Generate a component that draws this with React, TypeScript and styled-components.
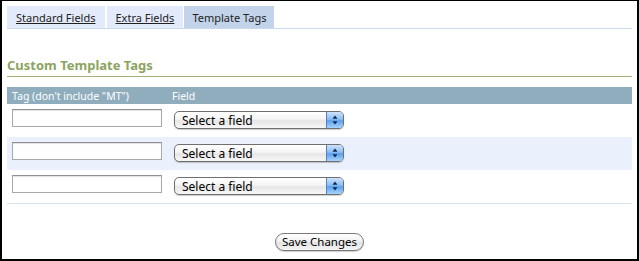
import React from 'react';
import styled, { createGlobalStyle } from 'styled-components';

const GlobalStyle = createGlobalStyle`
    html, body {
        margin: 0;
        padding: 0;
        background: #fff;
    }
    body {
        font-family: "Noto Sans", "DejaVu Sans", sans-serif;
        color: #000;
    }
`;

const Frame = styled.div`
    width: 639px;
    height: 261px;
    box-sizing: border-box;
    border: 2px solid #000;
    border-top-width: 1px;
    padding: 5px 5px 0 5px;
    background: #fff;
    display: flex;
    flex-direction: column;
`;

const TabBar = styled.ul`
    list-style: none;
    margin: 0;
    padding: 0;
    display: flex;
    gap: 2px;
    border-bottom: 1px solid #c9daee;
`;

const Tab = styled.li<{ $active?: boolean }>`
    height: 22px;
    padding: 0 ${(p) => (p.$active ? 8 : 9)}px;
    margin-left: ${(p) => (p.$active ? -1 : 0)}px;
    display: flex;
    align-items: center;
    font-size: 11px;
    background: ${(p) => (p.$active ? '#c3d4ea' : '#e3ebfa')};

    & a {
        color: #222;
        text-decoration: ${(p) => (p.$active ? 'none' : 'underline')};
    }
`;

const Heading = styled.h2`
    margin: 29px 0 0 0;
    padding: 0 0 3px 0;
    font-size: 13px;
    font-weight: bold;
    color: #8ba45f;
    border-bottom: 1px solid #9fb27c;
    line-height: 15px;
`;

const Table = styled.table`
    margin-top: 10px;
    width: 100%;
    border-collapse: collapse;
    font-size: 11px;
`;

const HeadCell = styled.th<{ $width?: number }>`
    background: #8fadbd;
    color: #fff;
    font-weight: normal;
    font-size: 10.5px;
    text-align: left;
    height: 17px;
    padding: 0 5px;
    ${(p) => (p.$width ? `width: ${p.$width}px;` : '')}
`;

const Row = styled.tr<{ $alt?: boolean }>`
    background: ${(p) => (p.$alt ? '#eaf1fd' : '#fff')};

    &:last-child td {
        border-bottom: 1px solid #d9e3f1;
    }
`;

const Cell = styled.td`
    padding: 5px 5px 0 5px;
    height: 28px;
    vertical-align: top;
`;

const TextInput = styled.input`
    box-sizing: border-box;
    width: 150px;
    height: 18px;
    border: 1px solid #a9a9a9;
    border-top-color: #8f8f8f;
    box-shadow: inset 0 1px 1px rgba(0, 0, 0, 0.12);
    padding: 0 3px;
    margin: 0;
    display: block;
    font-size: 11px;
`;

const SelectShell = styled.div`
    box-sizing: border-box;
    width: 170px;
    height: 18px;
    margin: 2px 0 0 2px;
    display: flex;
    border: 1px solid #6f6f6f;
    border-radius: 5px;
    overflow: hidden;
    background: linear-gradient(#ffffff 0%, #f4f4f4 45%, #e6e6e6 55%, #f7f7f7 100%);
    box-shadow: 0 1px 1px rgba(0, 0, 0, 0.2);
`;

const Select = styled.select`
    flex: 1;
    appearance: none;
    -webkit-appearance: none;
    border: none;
    background: transparent;
    font-family: "Noto Sans", "DejaVu Sans", sans-serif;
    font-size: 12px;
    color: #000;
    padding: 0 0 0 7px;
    margin: 0;
    outline: none;
`;

const Stepper = styled.span`
    width: 16px;
    display: flex;
    align-items: center;
    justify-content: center;
    border-left: 1px solid #5a7fb8;
    background: linear-gradient(#cfe3fb 0%, #8cbdf2 45%, #5aa0ee 55%, #a8d4fb 100%);
`;

const Footer = styled.div`
    display: flex;
    justify-content: center;
    margin-top: 29px;
`;

const SaveButton = styled.button`
    height: 18px;
    padding: 0 6px;
    border: 1px solid #7a7a7a;
    border-radius: 9px;
    background: linear-gradient(#ffffff 0%, #f2f2f2 45%, #e2e2e2 55%, #f5f5f5 100%);
    box-shadow: 0 1px 1px rgba(0, 0, 0, 0.2);
    font-family: "Noto Sans", "DejaVu Sans", sans-serif;
    font-size: 11.5px;
    color: #000;
    line-height: 16px;
`;

const Arrows = () => (
    <svg width="6" height="10" viewBox="0 0 6 10">
        <path d="M3 0.5 L5.5 3.8 L0.5 3.8 Z" fill="#0d2650" />
        <path d="M3 9.5 L5.5 6.2 L0.5 6.2 Z" fill="#0d2650" />
    </svg>
);

const rows = [false, true, false];

const App = () => {
    return (
        <>
            <GlobalStyle />
            <Frame>
                <TabBar>
                    <Tab><a href="#">Standard Fields</a></Tab>
                    <Tab><a href="#">Extra Fields</a></Tab>
                    <Tab $active><a>Template Tags</a></Tab>
                </TabBar>
                <Heading>Custom Template Tags</Heading>
                <Table>
                    <thead>
                        <tr>
                            <HeadCell $width={150}>Tag (don't include "MT")</HeadCell>
                            <HeadCell>Field</HeadCell>
                        </tr>
                    </thead>
                    <tbody>
                        {rows.map((alt, i) => (
                            <Row key={i} $alt={alt}>
                                <Cell><TextInput type="text" /></Cell>
                                <Cell>
                                    <SelectShell>
                                        <Select defaultValue="">
                                            <option value="">Select a field</option>
                                        </Select>
                                        <Stepper><Arrows /></Stepper>
                                    </SelectShell>
                                </Cell>
                            </Row>
                        ))}
                    </tbody>
                </Table>
                <Footer>
                    <SaveButton>Save Changes</SaveButton>
                </Footer>
            </Frame>
        </>
    );
};

export default App;
